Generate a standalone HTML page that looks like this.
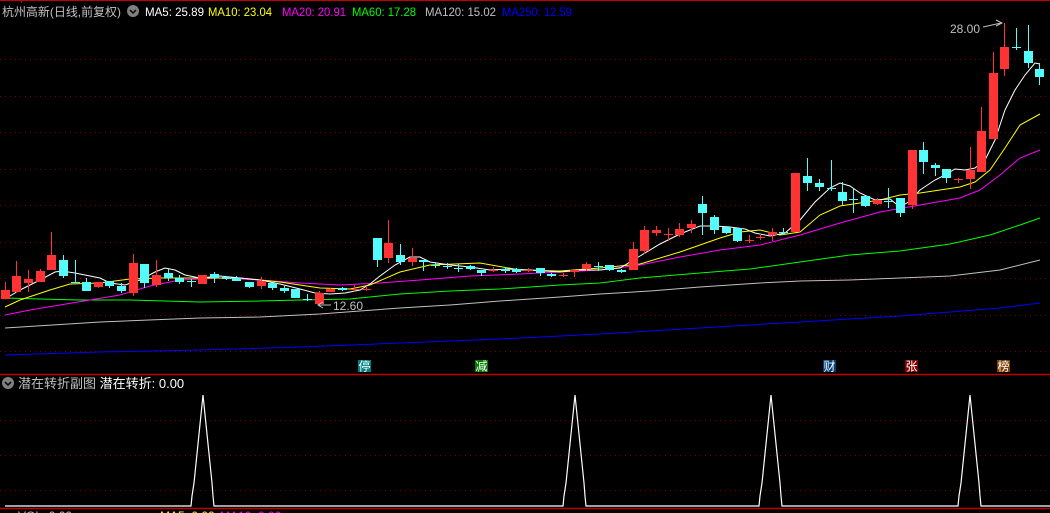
<!DOCTYPE html>
<html><head><meta charset="utf-8"><style>
html,body{margin:0;padding:0;background:#000;width:1050px;height:513px;overflow:hidden}
svg{display:block}
text{font-family:"Liberation Sans","Noto Sans CJK SC",sans-serif}
</style></head><body>
<svg id="s" width="1050" height="513" viewBox="0 0 1050 513" xmlns="http://www.w3.org/2000/svg">
<rect width="1050" height="513" fill="#000"/>
<line x1="0" y1="0.5" x2="1050" y2="0.5" stroke="#c00000"/>
<line x1="21.5" y1="0" x2="21.5" y2="3" stroke="#c00000"/>
<g id="grid" stroke="#800000" stroke-dasharray="1,4"></g>
<g id="ma" fill="none" stroke-width="1"></g>
<g id="cd"></g>
<text x="950" y="33" fill="#c0c0c0" font-size="12">28.00</text>
<polyline points="983,27 1001,23" stroke="#c0c0c0" fill="none"/>
<polyline points="996,20 1002,23 996,26" stroke="#c0c0c0" fill="none"/>
<text x="333" y="310" fill="#c0c0c0" font-size="12">12.60</text>
<polyline points="318,305 331,305" stroke="#c0c0c0" fill="none"/>
<polyline points="323,302 318,305 323,308" stroke="#c0c0c0" fill="none"/>
<text x="2" y="16" fill="#c0c0c0" font-size="12" textLength="119" lengthAdjust="spacingAndGlyphs">杭州高新(日线,前复权)</text>
<circle cx="133" cy="11" r="6" fill="#808080"/>
<polyline points="130,10 133,13 136,10" stroke="#000" fill="none" stroke-width="1.5"/>
<g font-size="12">
<text x="145" y="16" fill="#fff" textLength="59" lengthAdjust="spacingAndGlyphs">MA5: 25.89</text>
<text x="208" y="16" fill="#ffff00" textLength="64" lengthAdjust="spacingAndGlyphs">MA10: 23.04</text>
<text x="282" y="16" fill="#ff00ff" textLength="64" lengthAdjust="spacingAndGlyphs">MA20: 20.91</text>
<text x="352" y="16" fill="#00ff00" textLength="64" lengthAdjust="spacingAndGlyphs">MA60: 17.28</text>
<text x="425" y="16" fill="#c0c0c0" textLength="71" lengthAdjust="spacingAndGlyphs">MA120: 15.02</text>
<text x="502" y="16" fill="#0000ff" textLength="70" lengthAdjust="spacingAndGlyphs">MA250: 12.59</text>
</g>
<rect x="358" y="360" width="13" height="12" fill="#008080"/><text x="358.5" y="370.5" fill="#fff" font-size="12">停</text>
<rect x="475" y="360" width="13" height="12" fill="#007a00"/><text x="475.5" y="370.5" fill="#fff" font-size="12">减</text>
<rect x="823" y="360" width="13" height="12" fill="#003c78"/><text x="823.5" y="370.5" fill="#fff" font-size="12">财</text>
<rect x="905" y="360" width="13" height="12" fill="#800000"/><text x="905.5" y="370.5" fill="#fff" font-size="12">张</text>
<rect x="997" y="360" width="13" height="12" fill="#804000"/><text x="997.5" y="370.5" fill="#fff" font-size="12">榜</text>
<line x1="0" y1="374.5" x2="1050" y2="374.5" stroke="#c00000" stroke-width="1.5"/>
<circle cx="8" cy="383" r="6" fill="#808080"/>
<polyline points="5,382 8,385 11,382" stroke="#000" fill="none" stroke-width="1.5"/>
<text x="18" y="388" fill="#c0c0c0" font-size="13">潜在转折副图 <tspan fill="#fff">潜在转折: 0.00</tspan></text>
<g stroke="#800000" stroke-dasharray="1,4"><line x1="0" y1="420.5" x2="1050" y2="420.5"/><line x1="0" y1="455.5" x2="1050" y2="455.5"/><line x1="0" y1="490.5" x2="1050" y2="490.5"/></g>
<polyline fill="none" stroke="#fff" stroke-width="1.2" points="5,506 191,506 192,496 194,483 203,395 212,483 213,496 214,506 563,506 564,496 566,483 575,395 584,483 585,496 586,506 759,506 760,496 762,483 771,395 780,483 781,496 782,506 958,506 959,496 961,483 970,395 979,483 980,496 981,506 1050,506"/>
<line x1="0" y1="508.5" x2="1050" y2="508.5" stroke="#c00000" stroke-width="1.5"/>
<g font-size="12"><text x="18" y="520" fill="#c0c0c0">VOL: 0.00</text><text x="160" y="520" fill="#ffff00">MA5: 0.00</text><text x="220" y="520" fill="#ff00ff">MA10: 0.00</text></g>
</svg>
<script>
var NS="http://www.w3.org/2000/svg";
function el(p,t,a){var e=document.createElementNS(NS,t);for(var k in a)e.setAttribute(k,a[k]);p.appendChild(e);return e;}
var g=document.getElementById('grid');
[59,96,132,169,205,242,278,315,351].forEach(function(y){el(g,'line',{x1:0,y1:y+.5,x2:1050,y2:y+.5});});
var m=document.getElementById('ma');
var L={
'#0000ff':"5,355 100,352 200,350 300,347 400,343 500,339 600,334 700,328 800,322 900,316 1000,308 1040,303",
'#c0c0c0':"5,328 100,322 200,318 260,317 320,314 360,311 400,308 450,305 500,301 560,297 600,294 650,291 700,287 760,283 800,281 850,280 900,278 950,276 1000,270 1040,260",
'#00ff00':"5,298 40,299 80,300 130,300 200,302 260,301 300,300 350,299 400,294 450,291 500,289 560,285 600,283 640,278 700,273 750,269 800,262 850,255 900,251 950,244 990,235 1020,225 1040,218",
'#ff00ff':"5,315 30,310 60,305 90,300 120,295 150,286 180,280 220,278 260,280 300,283 340,285 380,283 420,280 470,276 520,274 560,272 600,270 640,265 680,257 720,250 760,245 800,235 840,223 880,212 920,205 960,198 980,190 1000,175 1020,158 1040,150",
'#ffff00':"5,307 20,300 50,290 70,284 100,283 130,279 160,278 200,278 240,278 280,282 320,288 350,289 370,285 400,272 430,265 480,263 520,270 560,271 600,268 640,264 680,252 700,245 720,238 740,232 760,230 780,235 800,232 820,215 840,206 860,203 880,200 900,195 920,193 940,190 960,187 975,182 990,170 1005,148 1020,125 1040,114",
'#ffffff':"5,299 20,290 40,280 55,272 62,271 75,273 90,276 100,278 110,283 125,285 140,280 155,272 165,268 175,270 185,275 200,278 220,276 240,278 260,280 280,284 300,289 315,293 330,294 345,293 360,290 370,284 380,276 395,265 410,257 420,257 430,262 450,265 470,267 490,270 510,269 530,270 560,272 580,270 600,270 620,268 640,256 660,244 680,234 700,226 715,226 730,227 745,229 755,233 770,236 785,233 800,220 815,202 830,188 840,183 850,186 860,193 875,200 890,199 900,207 910,201 920,190 935,180 945,175 955,169 965,170 975,168 985,160 995,140 1005,110 1015,90 1025,75 1035,63 1040,64"
};
for(var c in L)el(m,'polyline',{points:L[c],stroke:c});
var D=[[1,290,299,282,299,1],[12,276,292,261,293,1],[24,279,283,270,292,1],[36,271,282,269,282,1],[47,255,270,232,270,1],[59,260,276,255,278,0],[71,282,283,260,283,0],[82,282,291,278,291,0],[94,282,287,282,288,1],[105,281,286,281,288,0],[117,286,291,283,293,0],[129,263,293,254,296,1],[140,264,283,264,288,0],[152,275,285,260,287,1],[164,273,278,268,281,0],[175,278,282,275,284,0],[187,281,281,279,287,0],[198,275,284,275,284,1],[210,274,278,272,283,0],[222,277,279,276,280,0],[232,278,281,276,281,0],[245,282,287,282,288,0],[257,281,286,277,289,1],[268,283,288,283,290,0],[280,288,291,286,293,0],[291,289,298,289,298,0],[303,299,299,294,301,0],[315,293,304,291,304,1],[326,289,292,288,292,1],[338,288,290,287,291,0],[350,289,289,285,292,1],[362,289,289,286,291,1],[373,238,260,238,267,0],[384,243,258,220,263,1],[396,255,262,244,265,0],[408,258,262,248,266,1],[419,260,262,260,271,0],[431,265,265,262,268,0],[443,266,266,263,269,0],[454,268,268,264,272,0],[466,266,269,265,270,0],[477,270,273,270,276,0],[489,270,270,267,272,1],[501,269,271,267,273,0],[512,269,272,268,273,0],[524,270,270,268,272,1],[536,268,273,268,276,0],[547,274,276,273,277,0],[559,275,275,273,277,1],[570,270,272,270,277,1],[582,264,269,262,271,1],[594,266,266,262,271,0],[605,265,270,265,271,0],[617,270,272,269,273,0],[629,249,270,242,270,1],[640,230,251,226,254,1],[652,230,233,226,236,1],[664,234,234,228,241,1],[675,229,235,223,237,1],[687,224,228,220,233,1],[698,204,213,196,235,0],[710,217,230,215,234,0],[722,227,233,226,234,0],[733,228,241,228,242,0],[745,240,240,235,243,1],[756,237,237,234,240,1],[768,232,235,228,241,1],[779,232,233,228,235,0],[791,173,232,173,232,1],[803,176,183,158,191,0],[815,183,187,179,191,0],[827,188,188,160,191,0],[838,192,201,182,205,0],[849,199,199,188,213,0],[861,196,206,196,207,0],[873,200,204,198,205,1],[884,201,201,188,208,0],[896,198,213,198,217,0],[908,150,205,150,209,1],[919,150,162,142,174,0],[931,165,168,163,176,0],[942,169,178,169,183,0],[954,179,179,178,183,1],[966,170,179,147,189,1],[977,131,172,107,172,1],[989,73,139,52,139,1],[1000,47,69,23,76,1],[1012,47,47,28,50,0],[1024,51,63,25,68,0],[1035,69,77,63,85,0]];
var cg=document.getElementById('cd');
D.forEach(function(d){var col=d[5]?'#ff3333':'#54fcfc';var cx=d[0]+4.5;
el(cg,'line',{x1:cx,y1:d[3],x2:cx,y2:d[4],stroke:col,'stroke-width':1});
var h=Math.max(1,d[2]-d[1]);el(cg,'rect',{x:d[0],y:d[1],width:9,height:h,fill:col});});
</script>
</body></html>
